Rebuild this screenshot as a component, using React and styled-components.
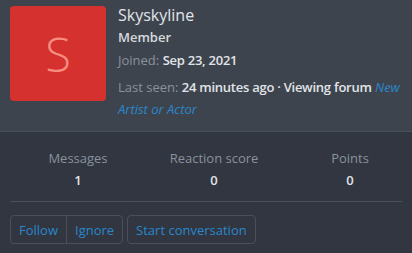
import React from "react";
import styled, { createGlobalStyle } from "styled-components";

const GlobalStyle = createGlobalStyle`
  body {
    margin: 0;
    background: #313641;
    font-family: 'Segoe UI', 'Open Sans', sans-serif;
  }
`;

const Card = styled.div`
  width: 412px;
  height: 253px;
  background: #313641;
  overflow: hidden;
`;

const Header = styled.div`
  display: flex;
  gap: 12px;
  padding: 6px 10px 0 10px;
  height: 125px;
  background: #3e444e;
  border-bottom: 1px solid #4b515b;
`;

const Avatar = styled.div`
  flex: 0 0 96px;
  height: 95px;
  border-radius: 4px;
  background: #d4312f;
  color: #f78d80;
  font-family: 'Open Sans', sans-serif;
  font-weight: 300;
  font-size: 47px;
  display: flex;
  align-items: center;
  justify-content: center;
`;

const Info = styled.div`
  display: flex;
  flex-direction: column;
  font-size: 13px;
  color: #8b919b;
  line-height: 22px;
`;

const Name = styled.div`
  font-size: 16px;
  color: #e1e4e8;
  line-height: 22px;
  margin-top: -2px;
`;

const Title = styled.div`
  font-weight: 600;
  color: #d6d9de;
`;

const Line = styled.div`
  margin-top: ${(p) => p.$top || 0}px;
`;

const Value = styled.b`
  font-weight: 600;
  color: #e1e4e8;
  letter-spacing: -0.25px;
`;

const Link = styled.a`
  color: #2a87cc;
  font-style: italic;
  text-decoration: none;
`;

const Stats = styled.div`
  display: grid;
  grid-template-columns: repeat(3, 136px);
  padding-top: 15px;
  height: 54px;
  margin: 0 10px;
  border-bottom: 1px solid #4a505a;
`;

const Stat = styled.div`
  display: flex;
  flex-direction: column;
  align-items: center;
  font-size: 13px;
  line-height: 22px;
`;

const StatLabel = styled.span`
  color: #8b919b;
`;

const StatValue = styled.span`
  color: #e1e4e8;
  font-weight: 600;
`;

const Buttons = styled.div`
  display: flex;
  gap: 4px;
  padding: 13px 10px 0 10px;
`;

const Group = styled.div`
  display: flex;
  border: 1px solid #4a505a;
  border-radius: 4px;
`;

const Button = styled.button`
  background: transparent;
  border: none;
  border-left: ${(p) => (p.$split ? "1px solid #4a505a" : "none")};
  color: #2a87cc;
  font-family: inherit;
  font-size: 13px;
  height: 27px;
  padding: 0 8px;
  cursor: pointer;
`;

export default function App() {
  return (
    <Card>
      <GlobalStyle />
      <Header>
        <Avatar>S</Avatar>
        <Info>
          <Name>Skyskyline</Name>
          <Title>Member</Title>
          <Line $top={1}>
            Joined: <Value>Sep 23, 2021</Value>
          </Line>
          <Line $top={5}>
            Last seen: <Value>24 minutes ago · Viewing forum</Value>{" "}
            <Link>New Artist or Actor</Link>
          </Line>
        </Info>
      </Header>
      <Stats>
        <Stat>
          <StatLabel>Messages</StatLabel>
          <StatValue>1</StatValue>
        </Stat>
        <Stat>
          <StatLabel>Reaction score</StatLabel>
          <StatValue>0</StatValue>
        </Stat>
        <Stat>
          <StatLabel>Points</StatLabel>
          <StatValue>0</StatValue>
        </Stat>
      </Stats>
      <Buttons>
        <Group>
          <Button>Follow</Button>
          <Button $split>Ignore</Button>
        </Group>
        <Group>
          <Button>Start conversation</Button>
        </Group>
      </Buttons>
    </Card>
  );
}
